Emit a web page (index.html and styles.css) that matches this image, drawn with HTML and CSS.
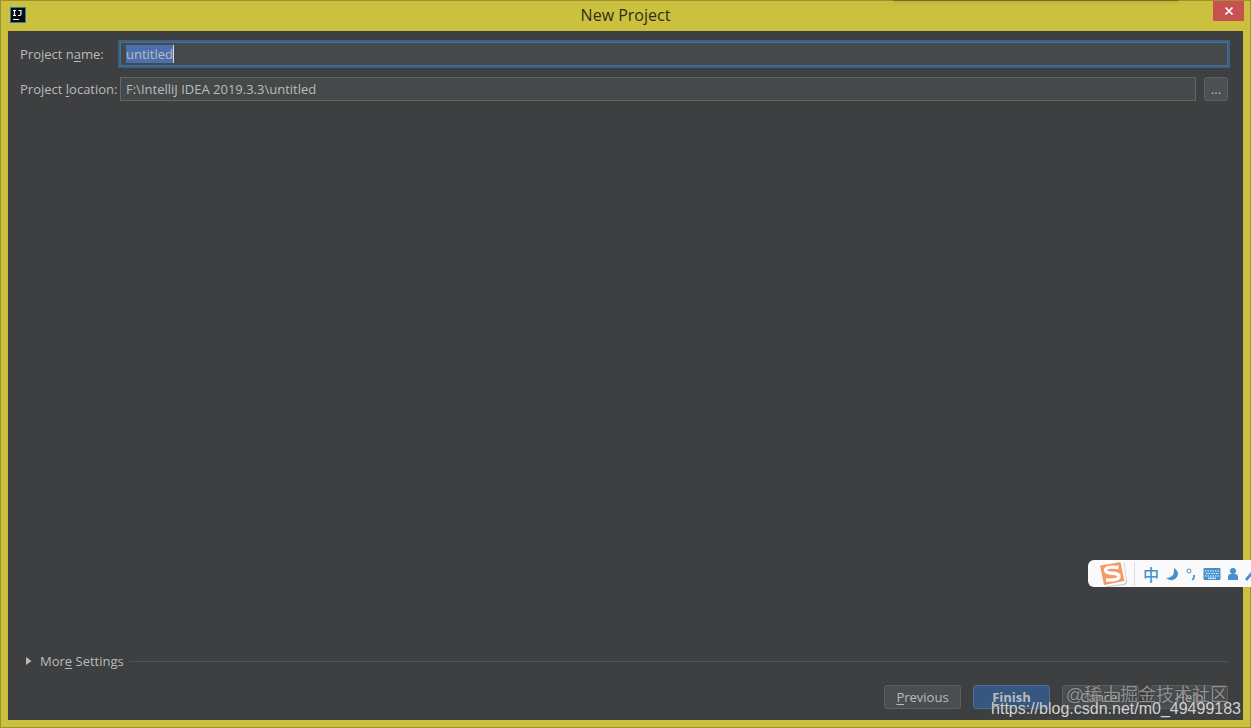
FILE: index.html
```html
<!DOCTYPE html>
<html lang="en">
<head>
  <meta charset="UTF-8" />
  <meta name="viewport" content="width=device-width, initial-scale=1.0" />
  <title>New Project</title>
  <link rel="stylesheet" href="styles.css">
</head>
<body>
  <div class="window">
    <header class="titlebar">
      <svg class="app-icon" viewBox="0 0 16 16" aria-hidden="true">
        <rect width="16" height="16" fill="#2c7fa9"/>
        <rect x="1" y="1" width="14" height="14" fill="#080a12"/>
        <path d="M3 3.500h3M4.500 3.500v5M3 8.500h3M8.500 3.500h2.500v3.500q0 1.500-1.500 1.500H8" fill="none" stroke="#fff" stroke-width="1.200"/>
        <path d="M3 12.500h6" stroke="#fff"/>
      </svg>
      <h1>New Project</h1>
      <button class="close" aria-label="Close">
        <svg viewBox="0 0 10 10" aria-hidden="true"><path d="M1.500 1.500l7 7M8.500 1.500l-7 7" stroke="#fff" stroke-width="1.700"/></svg>
      </button>
    </header>

    <main class="content">
      <form class="fields">
        <label for="project-name">Project n<u>a</u>me:</label>
        <div class="field focused">
          <input type="text" id="project-name" value="untitled" autocomplete="off" spellcheck="false" />
          <span class="caret"></span>
        </div>
        <label for="project-location">Project <u>l</u>ocation:</label>
        <div class="field">
          <input type="text" id="project-location" value="F:\IntelliJ IDEA 2019.3.3\untitled" spellcheck="false" />
          <button type="button" class="browse" aria-label="Browse">...</button>
        </div>
      </form>

      <button class="more">
        <svg viewBox="0 0 6 8" aria-hidden="true"><path d="M0 0l5.500 4L0 8z" fill="#bbb"/></svg>
        <span>Mor<u>e</u> Settings</span>
      </button>

      <footer class="actions">
        <button><u>P</u>revious</button>
        <button class="primary"><u>F</u>inish</button>
        <button>Cancel</button>
        <button>Help</button>
      </footer>
    </main>
  </div>

  <div class="top-shadow"></div>

  <div class="ime">
    <svg class="ime-logo" viewBox="0 0 30 28" aria-hidden="true">
      <path d="M3 5l20-4q3 0 3.500 3L29 21q0 3-3 4L9 27q-2 0-3-3z" fill="#c9c9c9"/>
      <path d="M2 4q0-2 2-2l19-2q2 0 2.500 2L28 20q0 3-3 4L8 26q-2 0-2.500-2z" fill="#fff"/>
      <path d="M2 5.500L22.500 2l4 19L6 25z" fill="#f49a68"/>
      <path d="M20.500 7.500Q8 6 7.500 10Q7.500 13 14 13.300Q21.500 13.500 21 17Q20 20.500 8 20" fill="none" stroke="#fff" stroke-width="3.400"/>
    </svg>
    <span class="ime-mode">中</span>
    <svg class="ime-moon" viewBox="0 0 14 14" aria-hidden="true"><path d="M9 1q6 4 3 9q-4 6-11 1q9 0 8-10z" fill="#4391cf"/></svg>
    <svg class="ime-punct" viewBox="0 0 12 14" aria-hidden="true"><circle cx="4" cy="4" r="2" fill="none" stroke="#4391cf"/><path d="M9 8v2q0 2-2 3" fill="none" stroke="#4391cf" stroke-width="1.800"/></svg>
    <svg class="ime-keys" viewBox="0 0 18 14" aria-hidden="true">
      <rect x="0.500" y="1" width="17" height="12" rx="1" fill="#4391cf"/>
      <path d="M2 4h14M3 6.500h13M2 9h14" stroke="#fff" stroke-width="1.200" stroke-dasharray="1.500 1"/>
      <path d="M5 11.200h8" stroke="#fff"/>
    </svg>
    <svg class="ime-user" viewBox="0 0 12 14" aria-hidden="true"><circle cx="6" cy="4" r="3" fill="#4391cf"/><path d="M1 13V10q0-3 3-3h4q3 0 3 3v3z" fill="#4391cf"/></svg>
    <svg class="ime-tool" viewBox="0 0 12 14" aria-hidden="true"><path d="M0 12l6-7 1-4 4 3-3 3-6 7z" fill="#4391cf"/></svg>
  </div>

  <div class="mark-community">@稀土掘金技术社区</div>
  <div class="mark-url">https://blog.csdn.net/m0_49499183</div>

  <script>
    const nameInput = document.getElementById('project-name');
    nameInput.focus();
    nameInput.select();
  </script>
</body>
</html>
```
FILE: styles.css
```css
* { box-sizing: border-box; margin: 0; padding: 0; }
body { height: 100vh; overflow: hidden; position: relative; font-family: "Open Sans", "Noto Sans CJK SC", sans-serif; font-size: 13px; line-height: 18px; color: #bbb; }
button, input { font: inherit; color: inherit; }
u { text-underline-offset: 2px; }

.window { height: 100%; display: flex; flex-direction: column; background: #ccc03f; border: 1px solid #9d9230; padding: 0 7px 7px; }
.titlebar { height: 30px; flex: none; display: grid; grid-template-columns: 30px 1fr 30px; }
.titlebar h1 { font-size: 16px; font-weight: 400; line-height: 28px; text-align: center; color: #302e18; }
.app-icon { width: 16px; height: 16px; margin: 6px 2px; }
.close { width: 31px; height: 20px; border: none; background: #c75050; display: flex; align-items: center; justify-content: center; }
.close svg { width: 10px; height: 10px; }

.content { flex: 1; display: flex; flex-direction: column; background: #3d3f41; padding: 11px 15px 11px 12px; }
.fields { display: grid; grid-template-columns: 100px 1fr; row-gap: 11px; align-items: center; }
.field { display: flex; gap: 8px; position: relative; }
.field input { flex: 1; min-width: 0; height: 24px; padding: 0 5px; background: #45494a; border: 1px solid #646666; outline: none; }
.field.focused input { border-color: #466d94; box-shadow: 0 0 0 2px #3d6185; }
.field input::selection { background: #4b6eaf; color: #bbb; }
.caret { position: absolute; left: 53px; top: 3px; width: 1px; height: 18px; background: #ddd; }
.browse { width: 24px; height: 24px; background: #4c5052; border: 1px solid #5e6060; border-radius: 3px; }

.more { margin-top: auto; margin-bottom: 14px; height: 20px; background: none; border: none; display: flex; align-items: center; padding-left: 6px; text-align: left; }
.more svg { width: 6px; height: 8px; margin-right: 8px; }
.more::after { content: ""; flex: 1; height: 1px; margin-left: 5px; background: #515355; }

.actions { display: flex; justify-content: flex-end; gap: 12px; }
.actions button { width: 77px; height: 24px; background: #4a4e50; border: 1px solid #5e6060; border-radius: 3px; }
.actions .primary { background: #365880; border-color: #4c708c; font-weight: 700; }

.top-shadow { position: absolute; top: 0; left: 893px; right: 73px; height: 1px; background: #776d20; box-shadow: 0 0 4px #776d20; }

.ime { position: absolute; right: 0; top: 560px; width: 163px; height: 27px; display: flex; align-items: center; background: #fafafa; border-radius: 6px 0 0 6px; padding-left: 10px; overflow: hidden; }
.ime svg { flex: none; height: 14px; }
.ime .ime-logo { width: 30px; height: 28px; margin-right: 6px; }
.ime-mode { font-family: "Noto Sans CJK SC", sans-serif; font-size: 16px; font-weight: 500; line-height: 24px; color: #4391cf; border-left: 1px solid #ddd; padding-left: 8px; margin-right: 6px; }
.ime-moon { width: 14px; margin-right: 6px; }
.ime-punct { width: 12px; margin-right: 6px; }
.ime-keys { width: 18px; margin-right: 6px; }
.ime-user { width: 12px; margin-right: 6px; }
.ime-tool { width: 12px; }

.mark-community, .mark-url { position: absolute; white-space: nowrap; pointer-events: none; }
.mark-community { right: 23px; bottom: 20px; font-family: "Liberation Sans", "Noto Sans CJK SC", sans-serif; font-size: 18px; line-height: 26px; color: rgba(200, 200, 200, 0.6); text-shadow: 0 0 2px #333; }
.mark-url { right: 10px; bottom: 9px; font-family: "Liberation Sans", sans-serif; font-size: 16px; line-height: 20px; color: #d2d2d2; text-shadow: 0 0 1px #444; }
```
